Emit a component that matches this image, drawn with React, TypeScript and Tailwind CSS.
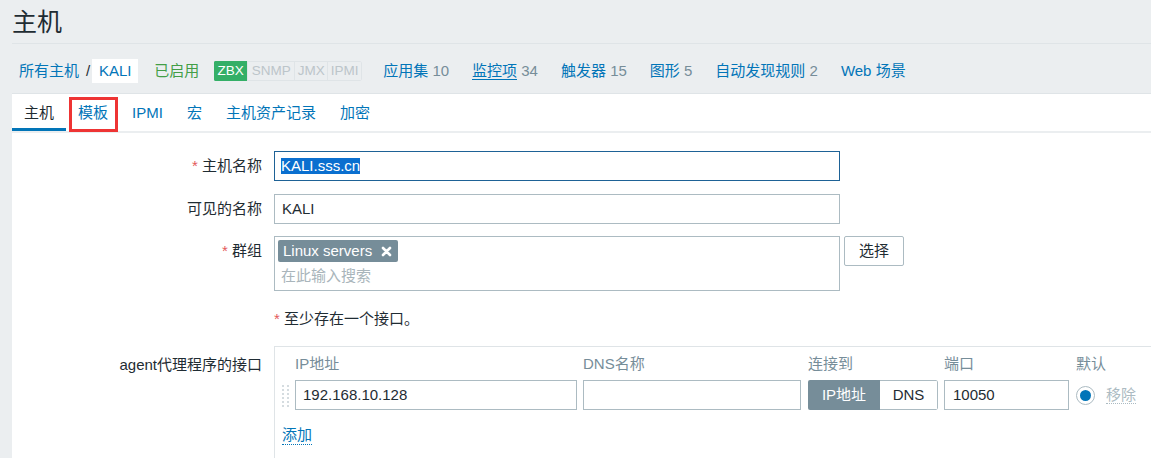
import React from "react";

function XIcon() {
  return (
    <svg width="11" height="11" viewBox="0 0 11 11" className="block">
      <path d="M2 2 L9 9 M9 2 L2 9" stroke="white" strokeWidth="2.6" strokeLinecap="round" />
    </svg>
  );
}

function DragHandle() {
  const dots: React.ReactElement[] = [];
  for (let r = 0; r < 6; r++) {
    for (let c = 0; c < 2; c++) {
      dots.push(<rect key={`${r}-${c}`} x={c * 5} y={r * 4} width="2" height="2" fill="#d5dce0" />);
    }
  }
  return (
    <svg width="8" height="22" viewBox="0 0 8 22" className="block">
      {dots}
    </svg>
  );
}

function NavItem({ label, count, underline }: { label: string; count?: string; underline?: boolean }) {
  return (
    <span className="ml-[23px] whitespace-nowrap">
      <span className={underline ? "text-[#0275b8] border-b border-[#0275b8]" : "text-[#0275b8]"}>{label}</span>
      {count && <span className="text-[#768d99]"> {count}</span>}
    </span>
  );
}

export default function App() {
  return (
    <div className="w-[1151px] h-[458px] overflow-hidden bg-[#ebeef0] font-['Liberation_Sans','Noto_Sans_CJK_SC',sans-serif] text-[15px] text-[#1f2c33]">
      <div className="pl-[12px]">
        {/* Title */}
        <div className="h-[44px] border-b border-[#dfe4e7] flex items-center">
          <h1 className="text-[25px] leading-[30px] text-[#1f2c33]">主机</h1>
        </div>

        {/* Breadcrumb / nav */}
        <div className="h-[50px] pt-[5px] border-b border-[#dfe4e7] flex items-center pl-[7px] whitespace-nowrap">
          <span className="text-[#0275b8]">所有主机</span>
          <span className="ml-[7px] mr-[2px] text-[#1f2c33]">/</span>
          <span className="h-[24px] w-[46px] bg-white flex items-center justify-center text-[#0275b8]">KALI</span>
          <span className="ml-[16px] text-[#429e47]">已启用</span>
          <span className="ml-[15px] flex h-[20px] text-[13.5px] leading-[18px] rounded-[2px] overflow-hidden">
            <span className="w-[33px] text-center bg-[#34af67] border border-[#34af67] text-white">ZBX</span>
            <span className="w-[48px] text-center bg-[#ebeef0] border border-[#dfe4e7] text-[#bcc5ca]">SNMP</span>
            <span className="w-[33px] text-center bg-[#ebeef0] border-y border-r border-[#dfe4e7] text-[#bcc5ca]">JMX</span>
            <span className="w-[34px] text-center bg-[#ebeef0] border-y border-r border-[#dfe4e7] rounded-r-[2px] text-[#bcc5ca]">IPMI</span>
          </span>
          <span className="ml-[-2px]" />
          <NavItem label="应用集" count="10" />
          <NavItem label="监控项" count="34" underline />
          <NavItem label="触发器" count="15" />
          <NavItem label="图形" count="5" />
          <NavItem label="自动发现规则" count="2" />
          <NavItem label="Web 场景" />
        </div>

        {/* White panel */}
        <div className="bg-white pb-[20px]">
          {/* Tabs */}
          <div className="flex h-[39px] border-b-2 border-[#ebeef0]">
            <div className="px-[12px] pt-[4px] h-[37px] flex items-center border-b-[3px] border-[#0275b8] text-[#1f2c33]">主机</div>
            <div className="relative px-[12px] pt-[4px] h-[37px] flex items-center border-b-[3px] border-transparent text-[#0275b8]">
              模板
              <span className="absolute left-[3px] right-[2px] top-[3px] bottom-[-4px] border-[3px] border-[#ee3434]" />
            </div>
            <div className="px-[12px] pt-[4px] h-[37px] flex items-center border-b-[3px] border-transparent text-[#0275b8]">IPMI</div>
            <div className="px-[12px] pt-[4px] h-[37px] flex items-center border-b-[3px] border-transparent text-[#0275b8]">宏</div>
            <div className="px-[12px] pt-[4px] h-[37px] flex items-center border-b-[3px] border-transparent text-[#0275b8]">主机资产记录</div>
            <div className="px-[12px] pt-[4px] h-[37px] flex items-center border-b-[3px] border-transparent text-[#0275b8]">加密</div>
          </div>

          {/* Form */}
          <div className="pt-[18px]">
            <div className="flex mb-[13px]">
              <div className="w-[250px] shrink-0 text-right leading-[30px]">
                <span className="text-[#e45959]">*</span> 主机名称
              </div>
              <div className="ml-[12px] w-[566px] shrink-0 h-[30px] border border-[#1e6296] flex items-center px-[6px]">
                <span className="bg-[#0a6fcf] text-white leading-[16px]">KALI.sss.cn</span>
              </div>
            </div>

            <div className="flex mb-[12px]">
              <div className="w-[250px] shrink-0 text-right leading-[30px]">可见的名称</div>
              <div className="ml-[12px] w-[566px] shrink-0 h-[30px] border border-[#acbbc2] flex items-center px-[7px]">KALI</div>
            </div>

            <div className="flex items-start">
              <div className="w-[250px] shrink-0 text-right leading-[30px]">
                <span className="text-[#e45959]">*</span> 群组
              </div>
              <div className="ml-[12px] w-[566px] shrink-0 h-[55px] border border-[#acbbc2] pt-[3px] pl-[3px]">
                <div className="inline-flex items-center h-[22px] bg-[#768d99] rounded-[2px] pl-[5px] pr-[6px] text-white">
                  <span className="leading-[22px]">Linux servers</span>
                  <span className="ml-[9px]"><XIcon /></span>
                </div>
                <div className="pl-[3px] pt-[2px] leading-[22px] text-[#a9b5bb]">在此输入搜索</div>
              </div>
              <div className="ml-[4px] w-[60px] shrink-0 h-[30px] border border-[#acbbc2] rounded-[2px] flex items-center justify-center">选择</div>
            </div>

            <div className="flex mt-[18px]">
              <div className="w-[250px] shrink-0" />
              <div className="ml-[12px] leading-[20px]">
                <span className="text-[#e45959]">*</span> 至少存在一个接口。
              </div>
            </div>

            <div className="flex mt-[17px] items-start">
              <div className="w-[250px] shrink-0 text-right leading-[30px] pt-[4px] whitespace-nowrap">agent代理程序的接口</div>
              <div className="ml-[12px] w-[900px] shrink-0 border border-[#dfe4e7] pt-[8px] pl-[7px] pb-[12px]">
                <div className="grid grid-cols-[13px_288px_225px_136px_132px_100px] leading-[18px] text-[#768d99]">
                  <div />
                  <div>IP地址</div>
                  <div>DNS名称</div>
                  <div>连接到</div>
                  <div>端口</div>
                  <div>默认</div>
                </div>
                <div className="grid grid-cols-[13px_288px_225px_136px_132px_100px] mt-[7px] items-center">
                  <div className="pt-[1px]"><DragHandle /></div>
                  <div className="w-[282px] h-[30px] border border-[#acbbc2] flex items-center px-[7px]">192.168.10.128</div>
                  <div className="w-[218px] h-[30px] border border-[#acbbc2]" />
                  <div className="w-[130px] h-[30px] flex rounded-[2px] overflow-hidden">
                    <div className="w-[72px] h-full bg-[#768d99] text-white flex items-center justify-center">IP地址</div>
                    <div className="w-[58px] h-full border-y border-r border-[#acbbc2] rounded-r-[2px] flex items-center justify-center">DNS</div>
                  </div>
                  <div className="w-[125px] h-[30px] border border-[#acbbc2] flex items-center px-[8px]">10050</div>
                  <div className="flex items-center">
                    <span className="w-[19px] h-[19px] rounded-full border border-[#acbbc2] flex items-center justify-center">
                      <span className="w-[11px] h-[11px] rounded-full bg-[#0275b8]" />
                    </span>
                    <span className="ml-[11px] text-[#acbbc2] leading-[17px] border-b border-dotted border-[#acbbc2]">移除</span>
                  </div>
                </div>
                <div className="mt-[14px]">
                  <span className="text-[#0275b8] leading-[18px] inline-block border-b border-dotted border-[#0275b8]">添加</span>
                </div>
              </div>
            </div>
          </div>
        </div>
      </div>
    </div>
  );
}
